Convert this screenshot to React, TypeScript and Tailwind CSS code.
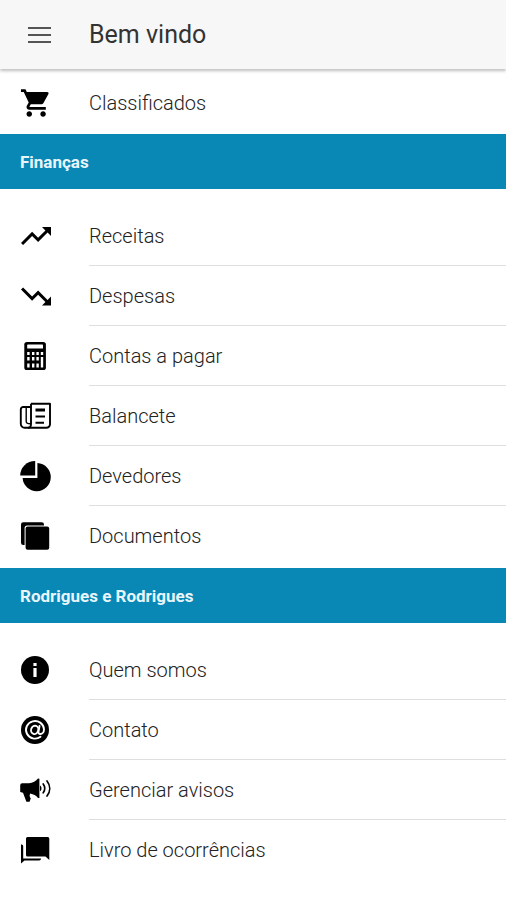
import type { ReactNode } from "react";

type Item = { label: string; icon: ReactNode };

function Icon({ children }: { children: ReactNode }) {
  return (
    <svg viewBox="0 0 32 32" className="size-8 shrink-0 fill-black" aria-hidden="true">
      {children}
    </svg>
  );
}

const cart = (
  <Icon>
    <path
      transform="translate(0.6 -0.6) scale(1.38)"
      d="M7 18c-1.1 0-1.99.9-1.99 2S5.9 22 7 22s2-.9 2-2-.9-2-2-2zM1 2v2h2l3.6 7.59-1.35 2.45c-.16.28-.25.61-.25.96 0 1.1.9 2 2 2h12v-2H7.42c-.14 0-.25-.11-.25-.25l.03-.12.9-1.63h7.45c.75 0 1.41-.41 1.75-1.03l3.58-6.49A1.003 1.003 0 0 0 20 4H5.21l-.94-2H1zm16 16c-1.1 0-1.99.9-1.99 2s.89 2 1.99 2 2-.9 2-2-.9-2-2-2z"
    />
  </Icon>
);

const trendingUp = (
  <Icon>
    <path
      transform="translate(-1 -2) scale(1.5)"
      d="M16 6l2.29 2.29-4.88 4.88-4-4L2 16.59 3.41 18l6-6 4 4 6.3-6.29L22 12V6z"
    />
  </Icon>
);

const trendingDown = (
  <Icon>
    <path
      transform="translate(-1 -1.5) scale(1.5)"
      d="M16 18l2.29-2.29-4.88-4.88-4 4L2 7.41 3.41 6l6 6 4-4 6.3 6.29L22 12v6z"
    />
  </Icon>
);

const calculator = (
  <Icon>
    <rect x="5.3" y="2" width="21.6" height="28" rx="2.6" />
    <g className="fill-white">
      <rect x="8.2" y="4.6" width="15.8" height="4" rx="0.6" />
      <path d="M8.2 12h2.4v3H8.2zM13 12h2.4v3H13zM17.4 12h2.4v3h-2.4zM21.8 12h2.4v3h-2.4z" />
      <path d="M8.2 17h2.4v3.4H8.2zM13 17h2.4v3.4H13zM17.4 17h2.4v3.4h-2.4zM21.8 17h2.4v10.4h-2.4z" />
      <path d="M8.2 23.4h2.4v4H8.2zM13 23.4h2.4v4H13zM17.4 23.4h2.4v4h-2.4z" />
    </g>
  </Icon>
);

const newspaper = (
  <Icon>
    <g className="fill-none stroke-black" strokeWidth="1.9" strokeLinejoin="round">
      <path d="M12 3.8h19v20.4a3.6 3.6 0 0 1-3.6 3.6H5.6A3.8 3.8 0 0 1 1.8 24V9.4A2.4 2.4 0 0 1 4.2 7H12" />
      <path d="M12 3.8V24c0 2.2-1.2 3.8-3 3.8" />
      <path d="M7.2 7v14.5c0 1.8 1.6 2.2 4.4 2.2" strokeWidth="1.4" />
    </g>
    <path d="M16.5 8.6H26v3h-9.5zM16.5 15.4H26v2h-9.5zM16.5 21.8H25v2h-8.5z" />
  </Icon>
);

const pie = (
  <Icon>
    <path d="M16.2 1v14.6H1.2A14.8 14.6 0 0 1 16.2 1z" />
    <path d="M18.4 3A14.1 14.1 0 1 1 3.6 18h14.8z" />
  </Icon>
);

const copy = (
  <Icon>
    <path d="M4.3 2.2h18.4A2.3 2.3 0 0 1 25 4.5v.9H8.2A2.6 2.6 0 0 0 5.6 8v17H4.3A2.3 2.3 0 0 1 2 22.7V4.5a2.3 2.3 0 0 1 2.3-2.3z" />
    <rect x="6.6" y="6.4" width="23.6" height="23.4" rx="2" />
  </Icon>
);

const info = (
  <Icon>
    <circle cx="16" cy="16" r="14" />
    <path className="fill-white" d="M14.4 9h3.2v3h-3.2zM14.4 14h3.2v9h-3.2z" />
  </Icon>
);

const at = (
  <Icon>
    <circle cx="16" cy="16" r="14" />
    <g className="fill-none stroke-white" strokeWidth="1.9" strokeLinecap="round">
      <path d="M21.5 22.8A9 8.8 0 1 1 25 15.2c0 3-1.8 4.8-3.6 4.8-1.6 0-2.2-1.2-1.9-2.8l1-5.2" />
      <ellipse cx="15.7" cy="15.9" rx="3.6" ry="4.2" transform="rotate(18 15.7 15.9)" />
    </g>
  </Icon>
);

const megaphone = (
  <Icon>
    <path d="M3.2 9.2H10c3.8 0 7-2 9-4.6l1.4.1v19.2l-1.4.1c-1.8-2.2-4.6-3.8-7.8-4.4-.8 1.6-.8 3 .4 4.6.4.6.2 1-.3 1.4l-.7 2.2H7.4L4 18.8 1.2 18v-6.8a2 2 0 0 1 2-2z" />
    <path d="M21 11.500c2 1 2 4.800 0 5.800z" />
    <g className="fill-none stroke-black" strokeWidth="1.7" strokeLinecap="round">
      <path d="M24.2 10c1.9 2.6 1.9 6.2 0 8.8" />
      <path d="M28 7c3.6 4.6 3.6 10.4 0 15" />
    </g>
  </Icon>
);

const chat = (
  <Icon>
    <path d="M8.5 3h20.3a1.5 1.5 0 0 1 1.5 1.5V26l-3.8-3.4h-18A1.5 1.5 0 0 1 7 21.1V4.5A1.5 1.5 0 0 1 8.5 3z" />
    <path d="M2 10.5c1.4 0 2.2.6 2.2 2v11.900H22c0 1.300-.6 2-2 2H5.500L2 29.500z" />
  </Icon>
);

const financas: Item[] = [
  { label: "Receitas", icon: trendingUp },
  { label: "Despesas", icon: trendingDown },
  { label: "Contas a pagar", icon: calculator },
  { label: "Balancete", icon: newspaper },
  { label: "Devedores", icon: pie },
  { label: "Documentos", icon: copy },
];

const rodrigues: Item[] = [
  { label: "Quem somos", icon: info },
  { label: "Contato", icon: at },
  { label: "Gerenciar avisos", icon: megaphone },
  { label: "Livro de ocorrências", icon: chat },
];

function Row({ label, icon }: Item) {
  return (
    <li className="group">
      <a href="#" className="flex h-[60px] items-center gap-[38px] pl-[19px]">
        {icon}
        <span className="flex h-full flex-1 items-center border-b border-[#dedede] pt-px text-xl font-light text-[#222] group-last:border-transparent">
          {label}
        </span>
      </a>
    </li>
  );
}

function Section({ title, items }: { title: string; items: Item[] }) {
  return (
    <section>
      <h2 className="flex h-[55px] items-center bg-[#0987b5] px-5 pt-[3px] text-[17px] font-bold text-[#e8f6fc]">
        {title}
      </h2>
      <ul className="pt-[17px] pb-[2px]">
        {items.map((item) => (
          <Row key={item.label} {...item} />
        ))}
      </ul>
    </section>
  );
}

export default function App() {
  return (
    <div className="min-h-screen bg-white font-['Roboto','Liberation_Sans',sans-serif]">
      <header className="relative flex h-[69px] items-center gap-[38px] bg-[#f7f7f7] pl-7 shadow-[0_2px_3px_rgba(0,0,0,0.25)]">
        <button type="button" aria-label="Menu" className="flex w-[23px] flex-col gap-[5px]">
          <span className="h-[2px] bg-[#555]" />
          <span className="h-[2px] bg-[#555]" />
          <span className="h-[2px] bg-[#555]" />
        </button>
        <h1 className="text-[25px] text-[#333]">Bem vindo</h1>
      </header>
      <main>
        <ul className="pt-1 pb-px">
          <Row label="Classificados" icon={cart} />
        </ul>
        <Section title="Finanças" items={financas} />
        <Section title="Rodrigues e Rodrigues" items={rodrigues} />
      </main>
    </div>
  );
}
